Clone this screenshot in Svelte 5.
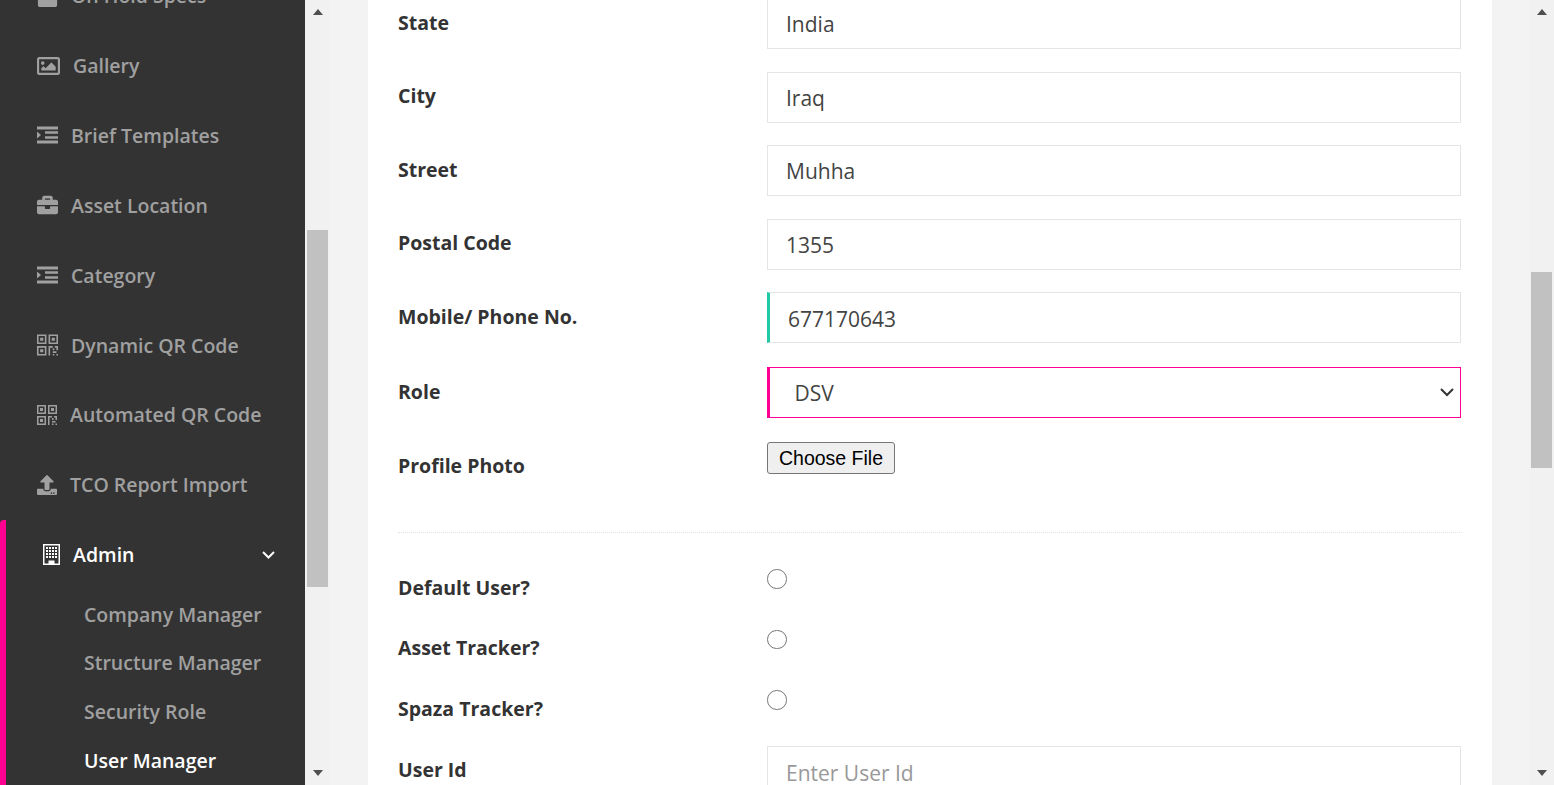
<script>
    const upperMenu = [
        { label: 'On Hold Specs', icon: 'lock', width: 21 },
        { label: 'Gallery', icon: 'image', width: 23 },
        { label: 'Brief Templates', icon: 'indent', width: 21 },
        { label: 'Asset Location', icon: 'case', width: 21 },
        { label: 'Category', icon: 'indent', width: 21 },
        { label: 'Dynamic QR Code', icon: 'qr', width: 21 },
        { label: 'Automated QR Code', icon: 'qr', width: 20 },
        { label: 'TCO Report Import', icon: 'upload', width: 20 }
    ];

    const adminLinks = [
        { label: 'Company Manager' },
        { label: 'Structure Manager' },
        { label: 'Security Role' },
        { label: 'User Manager', active: true }
    ];

    const addressFields = [
        { label: 'State', value: 'India' },
        { label: 'City', value: 'Iraq' },
        { label: 'Street', value: 'Muhha' },
        { label: 'Postal Code', value: '1355' }
    ];

    const flags = ['Default User?', 'Asset Tracker?', 'Spaza Tracker?'];

    // Icon outlines, viewBox differs per icon
    const icons = {
        image: { box: '0 64 512 384', height: 18, fit: 'none', d: 'M464 64H48C21.49 64 0 85.49 0 112v288c0 26.51 21.49 48 48 48h416c26.51 0 48-21.49 48-48V112c0-26.51-21.49-48-48-48zm-6 336H54a6 6 0 0 1-6-6V118a6 6 0 0 1 6-6h404a6 6 0 0 1 6 6v276a6 6 0 0 1-6 6zM128 152c-22.091 0-40 17.909-40 40s17.909 40 40 40 40-17.909 40-40-17.909-40-40-40zM96 352h320v-80l-87.515-87.515c-4.686-4.686-12.284-4.686-16.971 0L192 304l-39.515-39.515c-4.686-4.686-12.284-4.686-16.971 0L96 304v48z' },
        indent: { box: '0 0 21 17', d: 'M0 0h21v3H0zM8 4.700h13v2.600H8zM8 9.700h13v2.600H8zM0 14h21v3H0zM0 5l4 3.500L0 12z' },
        case: { box: '0 0 512 512', d: 'M320 336c0 8.84-7.16 16-16 16h-96c-8.84 0-16-7.16-16-16v-48H0v144c0 25.6 22.4 48 48 48h416c25.6 0 48-22.4 48-48V288H320v48zm144-208h-80V80c0-25.6-22.4-48-48-48H176c-25.6 0-48 22.4-48 48v48H48c-25.6 0-48 22.4-48 48v80h512v-80c0-25.6-22.4-48-48-48zm-144 0H192V96h128v32z' },
        qr: { box: '0 0 20 20', d: 'M0 0h9v9H0zM1.500 1.500v6h6v-6zM3 3h3v3H3zM11 0h9v9h-9zM12.500 1.500v6h6v-6zM14 3h3v3h-3zM0 11h9v9H0zM1.500 12.500v6h6v-6zM3 14h3v3H3zM11 11h4v1.500h-2.500V20H11zM15 13h1.500v2H15zM17 11h3v4h-1.500v-2.500H17zM15 16h3.500v1.500H15zM15 18.500h1.500V20H15zM18.500 18.500H20V20h-1.500z' },
        upload: { box: '0 0 512 512', d: 'M296 384h-80c-13.300 0-24-10.700-24-24V192h-87.700c-17.800 0-26.700-21.500-14.100-34.100L242.300 5.700c7.500-7.500 19.800-7.500 27.300 0l152.200 152.200c12.600 12.600 3.700 34.100-14.100 34.100H320v168c0 13.300-10.700 24-24 24zm216-8v112c0 13.300-10.700 24-24 24H24c-13.300 0-24-10.700-24-24V376c0-13.300 10.700-24 24-24h136v8c0 30.900 25.100 56 56 56h80c30.900 0 56-25.100 56-56v-8h136c13.300 0 24 10.700 24 24zm-124 88c0-11-9-20-20-20s-20 9-20 20 9 20 20 20 20-9 20-20zm64 0c0-11-9-20-20-20s-20 9-20 20 9 20 20 20 20-9 20-20z' },
        lock: { box: '0 0 448 512', d: 'M400 224h-24v-72C376 68 308 0 224 0S72 68 72 152v72H48c-26.500 0-48 21.500-48 48v192c0 26.500 21.500 48 48 48h352c26.500 0 48-21.500 48-48V272c0-26.500-21.500-48-48-48z' }
    };
</script>

<div class="page">
    <aside class="sidebar">
        <nav class="menu">
            {#each upperMenu as item}
                <a class="menu-item" href="#top">
                    <svg width={item.width} height={icons[item.icon].height ?? 22} viewBox={icons[item.icon].box} preserveAspectRatio={icons[item.icon].fit} fill="currentColor" fill-rule="evenodd"><path d={icons[item.icon].d} /></svg>
                    <span>{item.label}</span>
                </a>
            {/each}

            <div class="admin">
                <a class="menu-item open" href="#top">
                    <svg width="17" height="21" viewBox="0 0 17 21" fill="currentColor">
                        <path fill-rule="evenodd" d="M0 0h17v21H0zM1.500 1.500v18h4v-3h6v3h4v-18z" />
                        <path d="M3 3h2v2H3zM6 3h2v2H6zM9 3h2v2H9zM12 3h2v2h-2zM3 6h2v2H3zM6 6h2v2H6zM9 6h2v2H9zM12 6h2v2h-2zM3 9h2v2H3zM6 9h2v2H6zM9 9h2v2H9zM12 9h2v2h-2zM3 12h2v2H3zM6 12h2v2H6zM9 12h2v2H9zM12 12h2v2h-2z" />
                    </svg>
                    <span>Admin</span>
                    <svg class="chevron" width="13" height="8" viewBox="0 0 13 8" fill="none" stroke="currentColor" stroke-width="2"><path d="M1 1l5.500 5.500L12 1" /></svg>
                </a>
                <div class="submenu">
                    {#each adminLinks as link}
                        <a class="sub-item" class:active={link.active} href="#top">{link.label}</a>
                    {/each}
                </div>
            </div>
        </nav>
    </aside>

    <div class="scrollbar side-bar">
        <i class="arrow up"></i>
        <i class="thumb"></i>
        <i class="arrow down"></i>
    </div>

    <main class="content">
        <form class="card">
            {#each addressFields as field}
                <div class="row">
                    <label for={field.label}>{field.label}</label>
                    <input id={field.label} type="text" value={field.value} />
                </div>
            {/each}

            <div class="row">
                <label for="mobile">Mobile/ Phone No.</label>
                <input id="mobile" class="valid" type="text" value="677170643" />
            </div>

            <div class="row role-row">
                <label for="role">Role</label>
                <select id="role" class="required">
                    <option>DSV</option>
                </select>
            </div>

            <div class="row file-row">
                <label for="photo">Profile Photo</label>
                <input id="photo" class="file" type="file" />
            </div>

            <hr />

            {#each flags as flag}
                <div class="row flag-row">
                    <label for={flag}>{flag}</label>
                    <input id={flag} class="radio" type="radio" />
                </div>
            {/each}

            <div class="row user-row">
                <label for="user-id">User Id</label>
                <input id="user-id" type="text" placeholder="Enter User Id" />
            </div>
        </form>
    </main>

    <div class="scrollbar page-bar">
        <i class="arrow up"></i>
        <i class="thumb"></i>
        <i class="arrow down"></i>
    </div>
</div>

<style>
    :global(body) {
        margin: 0;
        overflow: hidden;
    }

    .page {
        display: flex;
        height: 785px;
        overflow: hidden;
        background: #f3f3f3;
        font-family: "Open Sans", sans-serif;
    }

    .sidebar {
        width: 305px;
        flex-shrink: 0;
        overflow: hidden;
        background: #333333;
    }

    .menu {
        margin-top: -39.300px;
    }

    .menu-item {
        display: flex;
        align-items: center;
        gap: 13px;
        height: 69.900px;
        padding-left: 37px;
        color: #a0a0a0;
        font-size: 19.500px;
        font-weight: 600;
        text-decoration: none;
    }

    .admin {
        border-left: 6px solid #ff0090;
        border-top-left-radius: 4px;
    }

    .menu-item.open {
        color: #ffffff;
    }

    .chevron {
        margin-left: auto;
        margin-right: 30px;
    }

    .submenu {
        display: flex;
        flex-direction: column;
        margin-top: 1px;
    }

    .sub-item {
        height: 48.700px;
        padding-left: 78px;
        color: #a0a0a0;
        font-size: 19.500px;
        font-weight: 600;
        line-height: 48.700px;
        text-decoration: none;
    }

    .sub-item.active {
        color: #ffffff;
    }

    .scrollbar {
        display: flex;
        flex-direction: column;
        align-items: center;
        flex-shrink: 0;
        box-sizing: border-box;
        height: 785px;
        background: #f1f1f1;
    }

    .side-bar {
        width: 25px;
    }

    .page-bar {
        width: 24px;
        padding-right: 1px;
    }

    .arrow {
        width: 0;
        height: 0;
        margin-top: 9px;
        border-left: 5.500px solid transparent;
        border-right: 5.500px solid transparent;
        border-bottom: 6px solid #505050;
    }

    .arrow.down {
        margin-top: auto;
        margin-bottom: 9px;
        border-bottom: 0;
        border-top: 6px solid #505050;
    }

    .thumb {
        display: block;
        width: 21px;
        background: #c1c1c1;
    }

    .side-bar .thumb {
        height: 357px;
        margin-top: 215px;
    }

    .page-bar .thumb {
        height: 196px;
        margin-top: 257px;
    }

    .content {
        flex: 1;
        min-width: 0;
        padding: 0 38px;
    }

    .card {
        display: block;
        height: 820px;
        margin-top: -2px;
        padding: 0 31px 0 30px;
        background: #ffffff;
    }

    .row {
        display: grid;
        grid-template-columns: 369px 694px;
        align-items: start;
        margin-bottom: 22.600px;
        color: #333333;
    }

    label {
        padding-top: 9.600px;
        font-size: 19.500px;
        font-weight: 700;
        line-height: 30px;
    }

    input[type="text"],
    select {
        box-sizing: border-box;
        width: 100%;
        height: 51px;
        border: 1px solid #e5e5e5;
        border-radius: 0;
        background: #ffffff;
        color: #444444;
        font-family: "Open Sans", sans-serif;
        font-size: 21px;
        padding: 1.500px 18px 0;
        outline: none;
    }

    input::placeholder {
        color: #999999;
    }

    input.valid {
        border-left: 3px solid #20c9a6;
    }

    select.required {
        margin-top: 1px;
        border: 1px solid #ff0090;
        border-left: 3px solid #ff0090;
        padding-left: 24.500px;
        appearance: none;
        background-image: url("data:image/svg+xml,%3Csvg xmlns='http://www.w3.org/2000/svg' width='14' height='9' fill='none' stroke='%23333' stroke-width='2'%3E%3Cpath d='M1 1l6 6 6-6'/%3E%3C/svg%3E");
        background-repeat: no-repeat;
        background-position: right 6px center;
    }

    .role-row label {
        padding-top: 10.600px;
    }

    .file-row {
        margin-top: 24px;
    }

    .file-row label {
        padding-top: 8.600px;
    }

    .file {
        width: 128px;
        height: 32px;
        overflow: hidden;
        font-family: "Liberation Sans", Arial, sans-serif;
        font-size: 19.500px;
    }

    .file::file-selector-button {
        box-sizing: border-box;
        width: 128px;
        height: 32px;
        margin: 0;
        padding: 1px 0 0;
        border: 1px solid #767676;
        border-radius: 3px;
        background: #efefef;
        color: #000000;
        font: inherit;
    }

    hr {
        height: 0;
        margin: 51px -1px 30.500px 0;
        border: 0;
        border-top: 1px dotted #e3e3e3;
    }

    .flag-row {
        height: 37.900px;
    }

    .flag-row label {
        padding-top: 9.500px;
    }

    .user-row {
        margin-top: 24.500px;
    }

    .user-row label {
        padding-top: 8.600px;
    }

    .radio {
        appearance: none;
        box-sizing: border-box;
        width: 19.500px;
        height: 19.500px;
        margin: 6px 0 0;
        border: 1.300px solid #767676;
        border-radius: 50%;
        background: #ffffff;
    }
</style>
